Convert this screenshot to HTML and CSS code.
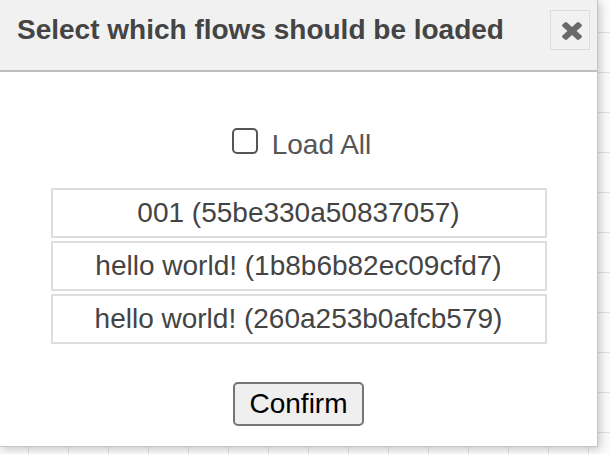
FILE: index.html
```html
<!DOCTYPE html>
<html>
<head>
<meta charset="utf-8">
<link rel="stylesheet" href="styles.css">
</head>
<body>
<div class="dialog">
  <div class="dialog-header">
    <h1 class="dialog-title">Select which flows should be loaded</h1>
    <button class="close-btn" aria-label="Close">
      <svg class="close-icon" viewBox="110 -18 1188 1188" preserveAspectRatio="none">
        <path d="M1298 214q0 -40 -28 -68l-136 -136q-28 -28 -68 -28t-68 28l-294 294l-294 -294q-28 -28 -68 -28t-68 28l-136 136q-28 28 -28 68t28 68l294 294l-294 294q-28 28 -28 68t28 68l136 136q28 28 68 28t68 -28l294 -294l294 294q28 28 68 28t68 -28l136 -136q28 -28 28 -68t-28 -68l-294 -294l294 -294q28 -28 28 -68z"/>
      </svg>
    </button>
  </div>
  <div class="dialog-body">
    <label class="load-all">
      <input type="checkbox" class="check">
      <span class="load-all-text">Load All</span>
    </label>
    <div class="flow-list">
      <div class="flow-item">001 (55be330a50837057)</div>
      <div class="flow-item">hello world! (1b8b6b82ec09cfd7)</div>
      <div class="flow-item">hello world! (260a253b0afcb579)</div>
    </div>
    <button class="confirm">Confirm</button>
  </div>
</div>
</body>
</html>
```
FILE: styles.css
```css
html, body {
  margin: 0;
  padding: 0;
}
body {
  width: 610px;
  height: 454px;
  overflow: hidden;
  font-family: "Liberation Sans", Arial, sans-serif;
  background-color: #fbfbfb;
  background-image:
    linear-gradient(to right, #e2e2e2 1px, transparent 1px),
    linear-gradient(to bottom, #e2e2e2 1px, transparent 1px);
  background-size: 40px 40px;
  background-position: 28px 32px;
}
.dialog {
  width: 597px;
  height: 446px;
  background: #fff;
  border-right: 1px solid #c6c6c6;
  border-bottom: 1px solid #c6c6c6;
  box-shadow: 2px 2px 9px rgba(0, 0, 0, 0.22);
  display: flex;
  flex-direction: column;
}
.dialog-header {
  height: 72px;
  flex: none;
  box-sizing: border-box;
  padding: 10px 7px 20px 17px;
  background: #f1f1f1;
  border-bottom: 2px solid #bebebe;
  display: flex;
  align-items: center;
  justify-content: space-between;
}
.dialog-title {
  margin: 0;
  font-size: 28px;
  font-weight: bold;
  color: #444;
  line-height: 40px;
  white-space: nowrap;
}
.close-btn {
  width: 40px;
  height: 40px;
  flex: none;
  box-sizing: border-box;
  border: 1px solid #dcdcdc;
  background: #f1f1f1;
  padding: 0;
  display: flex;
  align-items: center;
  justify-content: center;
}
.close-icon {
  width: 20px;
  height: 18px;
  fill: #6a6a6a;
  margin: 2px 0 0 3px;
  filter: blur(0.5px);
}
.dialog-body {
  flex: 1;
  display: flex;
  flex-direction: column;
  align-items: center;
  padding-top: 56px;
}
.load-all {
  display: flex;
  align-items: center;
  gap: 14px;
  height: 26px;
  font-size: 28px;
  color: #555;
  margin-left: 6px;
}
.load-all-text {
  padding-top: 8px;
}
.check {
  appearance: none;
  -webkit-appearance: none;
  margin: 0;
  width: 26px;
  height: 26px;
  box-sizing: border-box;
  border: 2px solid #555;
  border-radius: 5px;
  background: #fff;
}
.flow-list {
  margin-top: 34px;
  width: 496px;
  display: flex;
  flex-direction: column;
  gap: 3px;
}
.flow-item {
  height: 50px;
  box-sizing: border-box;
  border: 2px solid #dedede;
  display: flex;
  align-items: center;
  justify-content: center;
  font-size: 28px;
  color: #444;
}
.confirm {
  margin-top: 38px;
  width: 131px;
  height: 44px;
  box-sizing: border-box;
  border: 2px solid #767676;
  border-radius: 5px;
  background: #efefef;
  font-family: "Liberation Sans", Arial, sans-serif;
  font-size: 28px;
  color: #000;
  padding: 0;
}
```
